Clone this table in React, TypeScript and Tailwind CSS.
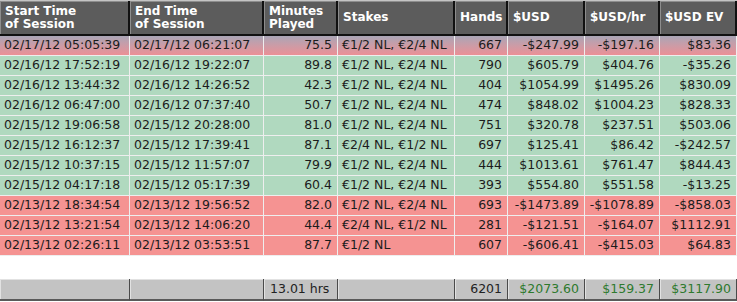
const cols = "grid grid-cols-[130px_134px_74px_117px_53px_77px_75px_77px]";

type Row = {
  start: string;
  end: string;
  mins: string;
  stakes: string;
  hands: string;
  usd: string;
  hr: string;
  ev: string;
  tone: "sel" | "win" | "loss";
};

const rows: Row[] = [
  { start: "02/17/12 05:05:39", end: "02/17/12 06:21:07", mins: "75.5", stakes: "€1/2 NL, €2/4 NL", hands: "667", usd: "-$247.99", hr: "-$197.16", ev: "$83.36", tone: "sel" },
  { start: "02/16/12 17:52:19", end: "02/16/12 19:22:07", mins: "89.8", stakes: "€1/2 NL, €2/4 NL", hands: "790", usd: "$605.79", hr: "$404.76", ev: "-$35.26", tone: "win" },
  { start: "02/16/12 13:44:32", end: "02/16/12 14:26:52", mins: "42.3", stakes: "€1/2 NL, €2/4 NL", hands: "404", usd: "$1054.99", hr: "$1495.26", ev: "$830.09", tone: "win" },
  { start: "02/16/12 06:47:00", end: "02/16/12 07:37:40", mins: "50.7", stakes: "€1/2 NL, €2/4 NL", hands: "474", usd: "$848.02", hr: "$1004.23", ev: "$828.33", tone: "win" },
  { start: "02/15/12 19:06:58", end: "02/15/12 20:28:00", mins: "81.0", stakes: "€1/2 NL, €2/4 NL", hands: "751", usd: "$320.78", hr: "$237.51", ev: "$503.06", tone: "win" },
  { start: "02/15/12 16:12:37", end: "02/15/12 17:39:41", mins: "87.1", stakes: "€2/4 NL, €1/2 NL", hands: "697", usd: "$125.41", hr: "$86.42", ev: "-$242.57", tone: "win" },
  { start: "02/15/12 10:37:15", end: "02/15/12 11:57:07", mins: "79.9", stakes: "€1/2 NL, €2/4 NL", hands: "444", usd: "$1013.61", hr: "$761.47", ev: "$844.43", tone: "win" },
  { start: "02/15/12 04:17:18", end: "02/15/12 05:17:39", mins: "60.4", stakes: "€1/2 NL, €2/4 NL", hands: "393", usd: "$554.80", hr: "$551.58", ev: "-$13.25", tone: "win" },
  { start: "02/13/12 18:34:54", end: "02/13/12 19:56:52", mins: "82.0", stakes: "€1/2 NL, €2/4 NL", hands: "693", usd: "-$1473.89", hr: "-$1078.89", ev: "-$858.03", tone: "loss" },
  { start: "02/13/12 13:21:54", end: "02/13/12 14:06:20", mins: "44.4", stakes: "€2/4 NL, €1/2 NL", hands: "281", usd: "-$121.51", hr: "-$164.07", ev: "$1112.91", tone: "loss" },
  { start: "02/13/12 02:26:11", end: "02/13/12 03:53:51", mins: "87.7", stakes: "€1/2 NL", hands: "607", usd: "-$606.41", hr: "-$415.03", ev: "$64.83", tone: "loss" },
];

const toneClass = {
  sel: "bg-gradient-to-b from-[#a9a5b6] to-[#ee8e94]",
  win: "bg-[#b0d9bf]",
  loss: "bg-[#f59392]",
};

function Head({ children }: { children: React.ReactNode }) {
  return (
    <div className="flex items-center pl-[5px] bg-[#5c5c5c] border-r-2 border-b-2 border-[#111] shadow-[inset_1px_1px_0_#8d8d8d] text-white font-bold text-[12px] leading-[13px]">
      {children}
    </div>
  );
}

function Cell({ children, right }: { children: React.ReactNode; right?: boolean }) {
  return (
    <div
      className={
        right
          ? "h-[20px] flex items-center justify-end pr-[5px] border-r border-b border-[#eeeeee] whitespace-nowrap"
          : "h-[20px] flex items-center pl-[4px] border-r border-b border-[#eeeeee] whitespace-nowrap"
      }
    >
      {children}
    </div>
  );
}

function Foot({ children, left, green }: { children?: React.ReactNode; left?: boolean; green?: boolean }) {
  return (
    <div
      className={
        (left ? "justify-start pl-[6px] " : "justify-end pr-[5px] ") +
        (green ? "text-[#2e7a2e] " : "text-[#222] ") +
        "flex items-center h-[22px] bg-[#c3c3c3] border-r border-[#4a4a4a] border-b-2 border-b-[#5a5a5a] shadow-[inset_1px_1px_0_#e2e2e2]"
      }
    >
      {children}
    </div>
  );
}

export default function App() {
  return (
    <div className="w-[737px] h-[302px] bg-white overflow-hidden text-[12.5px] text-[#1c1c1c] font-['DejaVu_Sans',sans-serif]">
      {/* header */}
      <div className={cols + " h-[36px] border-t border-[#c4c4c4]"}>
        <Head>Start Time<br />of Session</Head>
        <Head>End Time<br />of Session</Head>
        <Head>Minutes<br />Played</Head>
        <Head>Stakes</Head>
        <Head>Hands</Head>
        <Head>$USD</Head>
        <Head>$USD/hr</Head>
        <Head>$USD EV</Head>
      </div>

      {/* sessions */}
      {rows.map((r) => (
        <div key={r.start} className={cols + " " + toneClass[r.tone]}>
          <Cell>{r.start}</Cell>
          <Cell>{r.end}</Cell>
          <Cell right>{r.mins}</Cell>
          <Cell>{r.stakes}</Cell>
          <Cell right>{r.hands}</Cell>
          <Cell right>{r.usd}</Cell>
          <Cell right>{r.hr}</Cell>
          <Cell right>{r.ev}</Cell>
        </div>
      ))}

      <div className="h-[23px]" />

      {/* totals */}
      <div className={cols}>
        <Foot />
        <Foot />
        <Foot left>13.01 hrs</Foot>
        <Foot />
        <Foot>6201</Foot>
        <Foot green>$2073.60</Foot>
        <Foot green>$159.37</Foot>
        <Foot green>$3117.90</Foot>
      </div>
    </div>
  );
}
